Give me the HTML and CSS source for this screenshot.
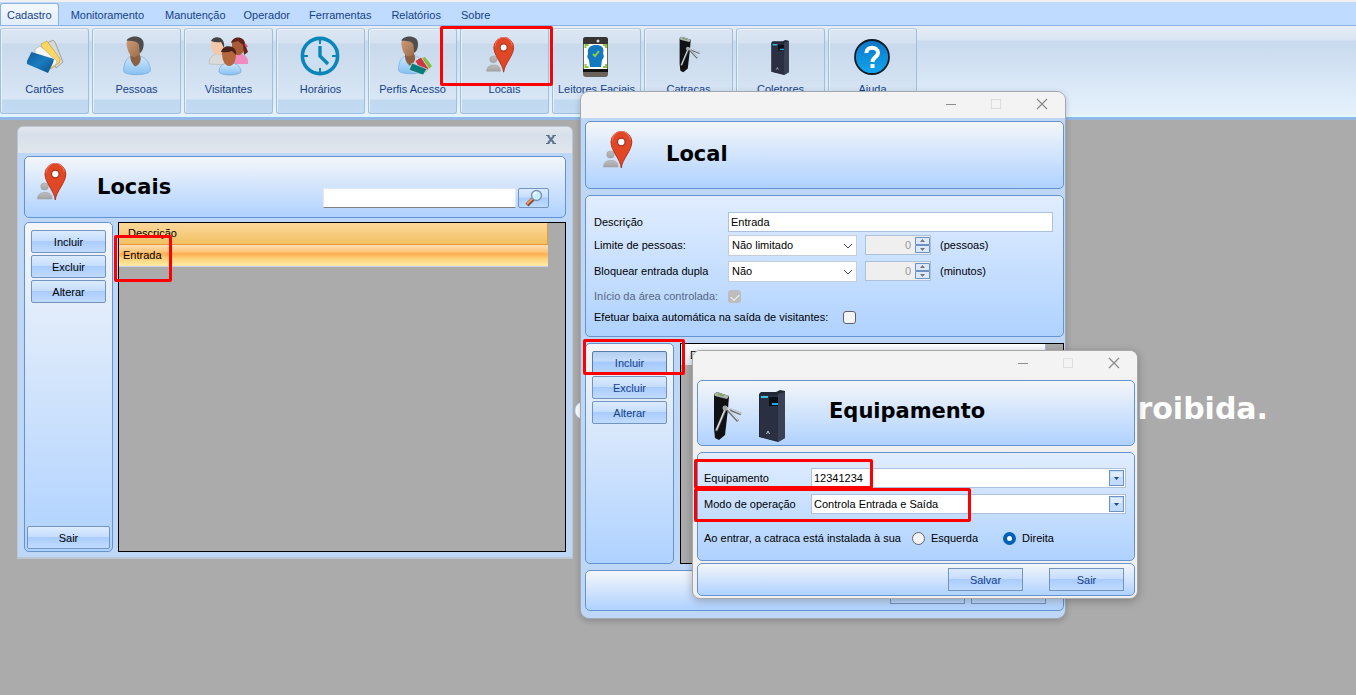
FILE: index.html
```html
<!DOCTYPE html>
<html lang="pt-BR">
<head>
<meta charset="utf-8">
<title>Controle de Acesso</title>
<link rel="stylesheet" href="styles.css">
</head>
<body>
<svg class="defs" aria-hidden="true">
  <defs>
    <linearGradient id="gBlue" x1="0" y1="0" x2="0" y2="1"><stop offset="0" stop-color="#cfe8fd"/><stop offset="1" stop-color="#86c0f2"/></linearGradient>
    <linearGradient id="gCard" x1="0" y1="0" x2="1" y2="1"><stop offset="0" stop-color="#0f5c9c"/><stop offset=".5" stop-color="#1b7cc0"/><stop offset="1" stop-color="#0c4c88"/></linearGradient>
    <linearGradient id="gGrey" x1="0" y1="0" x2="0" y2="1"><stop offset="0" stop-color="#bdbdbd"/><stop offset="1" stop-color="#a4a4a4"/></linearGradient>
    <linearGradient id="gSkin" x1="0" y1="0" x2="1" y2="1"><stop offset="0" stop-color="#cf9d78"/><stop offset="1" stop-color="#9a6a48"/></linearGradient>
    <linearGradient id="gHelp" x1="0" y1="0" x2="0" y2="1"><stop offset="0" stop-color="#0b76c8"/><stop offset="1" stop-color="#12a6ee"/></linearGradient>
    <symbol id="pin" viewBox="0 0 30 40">
      <ellipse cx="7.500" cy="23.500" rx="3.800" ry="3.500" fill="url(#gGrey)" stroke="#999" stroke-width=".5"/>
      <path d="M.500 36C.500 31 4 29.500 8 29.500S15 31 15 36Z" fill="url(#gGrey)" stroke="#999" stroke-width=".5"/>
      <path d="M18.300 37C17.500 28 8 20 8 11a10.400 10.400 0 0 1 20.800 0C28.800 20 19.100 28 18.300 37Z" fill="#e04724" stroke="#b5311a"/>
      <path d="M9.300 10a9 9 0 0 1 18-1" fill="none" stroke="#f0705a" stroke-width="1.200"/>
      <circle cx="18.300" cy="11" r="3.800" fill="#fff" stroke="#a63420" stroke-width="1.300"/>
    </symbol>
    <symbol id="person" viewBox="0 0 30 42">
      <path d="M1 37C1 27 4 24 9 21H18C25 23 29 29 29 36C29 42 2 42 1 37Z" fill="url(#gBlue)" stroke="#6ba6dc" stroke-width=".7"/>
      <path d="M8 17H17L19 23C19 28 16 31 13 32C9 28 8 25 8 22Z" fill="#8c6040"/>
      <path d="M4 8C4 1 20-1 20 9C20 17 17 22 12 22S5 15 4 8Z" fill="url(#gSkin)"/>
      <path d="M4 5C6-1 22-2 22 8C22 14 20 17 18 18L17 9C14 4 9 6 4 5Z" fill="#4d4d4d"/>
    </symbol>
    <symbol id="turnstile" viewBox="0 0 30 50">
      <path d="M1 3L4 1L16 5L15 18L12 44L6 49L2 47L1 38Z" fill="#101112"/>
      <path d="M1 3L4 1L16 5L14 8L2 5Z" fill="#b0b5b2"/><path d="M5 3L11 5" stroke="#79a852" stroke-width="1.500"/>
      <path d="M13 17L3 40M13 17L28 23M13 17L25 30" fill="none" stroke="#666d72" stroke-width="2.600"/>
      <path d="M13 16L3.500 39M13 16L28 22.500M13 16L25 29" fill="none" stroke="#dde2e5" stroke-width="1.300"/>
      <circle cx="12" cy="17" r="2.500" fill="#a0a8ac"/>
    </symbol>
    <symbol id="collector" viewBox="0 0 28 52">
      <path d="M1 4L3 2H18L22 0L27 1V48L20 52L1 47Z" fill="#202838"/>
      <path d="M20 4L27 2V48L20 52Z" fill="#3a4155"/>
      <path d="M2 5H20V51L2 47Z" fill="#2a3042"/>
      <path d="M3 6H10V8H3Z" fill="#34c5e5"/><rect x="11" y="7" width="9" height="9" fill="#0b1018"/>
      <path d="M14 13H20V15H14Z" fill="#1ba8ec"/><path d="M8.500 44L10 41L11.500 44" fill="none" stroke="#bac6d5"/>
    </symbol>
    <symbol id="chev" viewBox="0 0 10 6"><path d="M1 1L5 5L9 1" fill="none" stroke="#444"/></symbol>
    <symbol id="spin" viewBox="0 0 15 16">
      <path d="M.5 .5H14.500V7.500H.5ZM.5 8.500H14.500V15.500H.5Z" fill="#dce9fa" stroke="#6e91c4"/>
      <path d="M5 5L7.500 2L10 5ZM5 11L7.500 14L10 11Z" fill="#777"/>
    </symbol>
    <symbol id="drop" viewBox="0 0 15 16">
      <rect x=".5" y=".5" width="14" height="15" fill="#c4dcfb" stroke="#6e91c4"/>
      <path d="M2 2H13V7H2Z" fill="#dfecfd"/><path d="M5 7H10L7.500 10Z" fill="#174a92"/>
    </symbol>
    <symbol id="winctl" viewBox="0 0 104 12">
      <path d="M1 6.500H11" stroke="#8c8c8c"/><rect x="46.500" y="1.500" width="9" height="9" fill="none" stroke="#dedede"/>
      <path d="M92 1L102 11M102 1L92 11" stroke="#8a8a8a" stroke-width="1.200"/>
    </symbol>
  </defs>
</svg>

<header class="ribbon">
  <nav class="tabs">
    <button class="tab active">Cadastro</button><button class="tab">Monitoramento</button><button class="tab">Manutenção</button><button class="tab">Operador</button><button class="tab">Ferramentas</button><button class="tab">Relatórios</button><button class="tab">Sobre</button>
  </nav>
  <div class="tools">
    <button class="tool"><svg viewBox="0 0 44 42">
      <path d="M24 8L30 5L32 7L40 27L33 33Z" fill="#d8d8d8" stroke="#8a8a8a" stroke-width=".7"/>
      <path d="M18 9L24 6L37 24L36 28L28 34Z" fill="#ffd75e" stroke="#bda04d" stroke-width=".7"/>
      <path d="M12 14L17 11L34 26L33 29L26 34L12 26Z" fill="#f6f6f6" stroke="#aaa" stroke-width=".6"/>
      <path d="M8.500 17L31 24L30 28L25 38L4 29L4 26Z" fill="url(#gCard)"/></svg><span>Cartões</span></button>
    <button class="tool"><svg viewBox="0 0 44 42"><use href="#person" x="7" y="1" width="30" height="40"/></svg><span>Pessoas</span></button>
    <button class="tool"><svg viewBox="0 0 44 42">
      <path d="M2 29C2 21 7 19 12 19S23 23 22 30Z" fill="#dadada" stroke="#aaa" stroke-width=".5"/>
      <path d="M4 9C4 0 17 1 17 10C17 17 14 21 10 20S4 14 4 9Z" fill="#f3c7a9"/><path d="M4 6C6 0 19 0 17 13L14 7Q9 8 4 6Z" fill="#444"/>
      <path d="M24 29C24 21 28 19 33 19S42 23 41 29Z" fill="#f28ac2"/>
      <path d="M25 9C25 0 38 2 38 10C38 17 34 21 30 20S25 14 25 9Z" fill="#a95a36"/><path d="M24 8C26 0 38 1 38 9L41 17L37 20L36 10L31 6Z" fill="#60241b"/><path d="M38 9L40 12" stroke="#e04b87" stroke-width="2"/>
      <path d="M12 37C12 30 17 28 23 28S34 31 34 37C31 41 15 41 12 37Z" fill="url(#gBlue)" stroke="#6b9dcb" stroke-width=".6"/>
      <path d="M15 18C15 10 29 10 29 19C29 27 26 31 22 31S15 25 15 18Z" fill="#b4673d"/><path d="M14 17C16 8 31 10 29 20L25 16Q20 18 14 17Z" fill="#4b2219"/></svg><span>Visitantes</span></button>
    <button class="tool"><svg viewBox="0 0 44 42"><circle cx="21" cy="21" r="17.600" fill="#cbdff0" stroke="#0a86b8" stroke-width="3.600"/><path d="M21 5V9M21 33V37M5 21H9M33 21H37" stroke="#0a86b8" stroke-width="2"/><path d="M21 11V21L29 29" fill="none" stroke="#0a86b8" stroke-width="3.400"/></svg><span>Horários</span></button>
    <button class="tool"><svg viewBox="0 0 44 42"><use href="#person" x="6" y="1" width="29" height="39"/><path d="M29 24L34 22L41 31L34 38Z" fill="#83bd43"/><path d="M24 26L30 22L38 34L31 38Z" fill="#c93745" stroke="#f3dce2" stroke-width=".8"/><path d="M21 28L36 34L32 40L18 35Z" fill="#087c7b" stroke="#e1f2f4" stroke-width=".6"/></svg><span>Perfis Acesso</span></button>
    <button class="tool"><svg viewBox="0 0 44 42"><use href="#pin" x="3" y="2" width="29" height="38"/></svg><span>Locais</span></button>
    <button class="tool"><svg viewBox="0 0 44 42"><rect x="8" y="2" width="25" height="40" rx="3" fill="#6b625c"/><path d="M8 9V5Q8 2 11 2H30Q33 2 33 5V9Z" fill="#383432"/><rect x="9" y="9" width="23" height="25" fill="#fff"/><path d="M8 34H33V37H8Z" fill="#111"/><circle cx="23" cy="6" r="1.500" fill="#ddd"/><path d="M10.500 13V10H13.500M28 10H31V13M10.500 29V32H13.500M28 32H31V29" fill="none" stroke="#8cc63f" stroke-width="2"/><path d="M13 19C12 12 16 10 21 10S30 12 28 19C30 21 28 24 27 25L26 32H15L14 25C12 23 12 21 13 19Z" fill="#1478be"/><path d="M18 19L20 21L24 16" fill="none" stroke="#8bd23f" stroke-width="2"/></svg><span>Leitores Faciais</span></button>
    <button class="tool"><svg viewBox="0 0 44 42"><use href="#turnstile" x="9" y="1" width="28" height="37"/></svg><span>Catracas</span></button>
    <button class="tool"><svg viewBox="0 0 44 42"><use href="#collector" x="10" y="5" width="22" height="35"/></svg><span>Coletores</span></button>
    <button class="tool"><svg viewBox="0 0 44 42"><circle cx="21" cy="22" r="17" fill="url(#gHelp)" stroke="#111b25" stroke-width="1.800"/><path d="M15.500 18C15 11 27 11 27 18C27 22 21.500 22 21.500 27" fill="none" stroke="#fff" stroke-width="4"/><rect x="19.500" y="29" width="4" height="4" fill="#fff"/></svg><span>Ajuda</span></button>
  </div>
</header>
<main class="desktop"><p class="watermark"><span>c</span><span>roibida.</span></p></main>

<section class="window list-window" aria-label="Locais">
  <div class="titlebar"><button class="close" aria-label="Fechar"><svg viewBox="0 0 10 9"><path d="M0 .5H3.500M6.500 .5H10M0 8.500H3.500M6.500 8.500H10" stroke="#536985"/><path d="M2 1L8 8M8 1L2 8" stroke="#5d7594" stroke-width="2"/></svg></button></div>
  <div class="body">
    <div class="panel head">
      <svg class="pin"><use href="#pin"/></svg><h1>Locais</h1>
      <form class="search"><input type="text" aria-label="Pesquisar"><button type="button" class="btn" aria-label="Buscar"><svg viewBox="0 0 18 18"><path d="M2 16L8 10" stroke="#7b4a38" stroke-width="4"/><path d="M2 15L8 9" stroke="#f49850" stroke-width="2"/><circle cx="11.500" cy="6.500" r="5" fill="#c4f0ff" stroke="#7e8fb0" stroke-width="1.400"/><path d="M8.500 6Q9 3.500 11.500 3.300" stroke="#fff" stroke-width="1.500" fill="none"/></svg></button></form>
    </div>
    <div class="content">
      <div class="panel side"><button class="btn">Incluir</button><button class="btn">Excluir</button><button class="btn">Alterar</button><button class="btn exit">Sair</button></div>
      <div class="grid"><table><thead><tr><th>Descrição</th></tr></thead><tbody><tr><td>Entrada</td></tr></tbody></table></div>
    </div>
  </div>
</section>

<section class="window local-window" aria-label="Local">
  <div class="titlebar"><svg class="winctl"><use href="#winctl"/></svg></div>
  <div class="body">
    <div class="panel head"><svg class="pin"><use href="#pin"/></svg><h1>Local</h1></div>
    <form class="panel fields">
      <div class="row"><label for="desc">Descrição</label><input id="desc" class="text" type="text" value="Entrada"></div>
      <div class="row near"><label for="lim">Limite de pessoas:</label><span class="combo"><select id="lim"><option>Não limitado</option></select><svg><use href="#chev"/></svg></span><span class="number"><input id="np" type="text" value="0" disabled><svg><use href="#spin"/></svg></span><label for="np" class="unit">(pessoas)</label></div>
      <div class="row"><label for="dup">Bloquear entrada dupla</label><span class="combo"><select id="dup"><option>Não</option></select><svg><use href="#chev"/></svg></span><span class="number"><input id="nm" type="text" value="0" disabled><svg><use href="#spin"/></svg></span><label for="nm" class="unit">(minutos)</label></div>
      <div class="row low"><label for="ini" class="dim">Início da área controlada:</label><input id="ini" type="checkbox" checked disabled></div>
      <div class="row low near"><label for="bx" class="long">Efetuar baixa automática na saída de visitantes:</label><input id="bx" type="checkbox"></div>
    </form>
    <div class="content">
      <div class="panel side"><button class="btn pressed">Incluir</button><button class="btn">Excluir</button><button class="btn">Alterar</button></div>
      <div class="grid"><table><thead><tr><th>Descrição</th></tr></thead></table></div>
    </div>
    <div class="panel foot"><button class="btn square" aria-label="Salvar local"></button><button class="btn square" aria-label="Sair de local"></button></div>
  </div>
</section>

<section class="window equip-window" aria-label="Equipamento">
  <div class="titlebar"><svg class="winctl"><use href="#winctl"/></svg></div>
  <div class="body">
    <div class="panel head"><svg class="gate"><use href="#turnstile"/></svg><svg class="box"><use href="#collector"/></svg><h1>Equipamento</h1></div>
    <form class="panel fields">
      <div class="row"><label for="eq">Equipamento</label><span class="combo"><select id="eq"><option>12341234</option></select><svg><use href="#drop"/></svg></span></div>
      <div class="row"><label for="modo">Modo de operação</label><span class="combo"><select id="modo"><option>Controla Entrada e Saída</option></select><svg><use href="#drop"/></svg></span></div>
      <div class="row sides"><span class="question">Ao entrar, a catraca está instalada à sua</span><label><input type="radio" name="lado">Esquerda</label><label><input type="radio" name="lado" checked>Direita</label></div>
    </form>
    <div class="panel foot"><button class="btn square">Salvar</button><button class="btn square">Sair</button></div>
  </div>
</section>

<i class="mark mark-locais"></i><i class="mark mark-row"></i><i class="mark mark-add"></i><i class="mark mark-equip"></i><i class="mark mark-mode"></i>
</body>
</html>
```
FILE: styles.css
```css
* { box-sizing: border-box; }
body { margin: 0; min-height: 100vh; display: flex; flex-direction: column; position: relative; overflow: hidden; background: #ababab; color: #000; font: 11px "Liberation Sans", Arial, sans-serif; }
button, input, select { font: inherit; color: inherit; margin: 0; padding: 0; }
svg { display: block; }
.defs { position: absolute; width: 0; height: 0; }

.ribbon { border-top: 2px solid #f0f0f0; background: #bfdbff; }
.tabs { display: flex; height: 23px; align-items: flex-end; }
.tab { height: 22px; padding: 0 11px; border: 1px solid transparent; border-bottom: 0; background: none; color: #15428b; white-space: nowrap; }
.tab.active { padding: 0 6px; background: linear-gradient(#f4f9ff, #e1edfc); border-color: #8db2e3; border-radius: 3px 3px 0 0; }
.tab:nth-child(n+3) { padding: 0 8px; }
.tab:nth-child(n+5) { padding: 0 9px; }
.tools { display: flex; gap: 3px; height: 95px; padding: 2px 0 5px; border-top: 1px solid #8db2e3; border-bottom: 3px solid #94b8e6; background: linear-gradient(#e5edf7, #dbe6f4 14px, #c9daee 15px, #e6f2fd 90px, #dcfbff); box-shadow: inset 0 -1px #d8ffff; }
.tool { width: 89px; height: 86px; flex: none; display: flex; flex-direction: column; align-items: center; padding: 6px 0 0; border: 1px solid #a0bfdc; border-top-color: #bdcbdc; border-radius: 3px; color: #15428b; background: linear-gradient(#dce6f3, #d6e2f1 14px, #c8d9ec 15px, #d8e6f5 70px, #c0d8f0 71px, #c3daf3); box-shadow: inset 1px 1px #e8f1fa; }
.tool svg { width: 44px; height: 42px; }
.tool span { margin-top: 6px; line-height: 13px; white-space: nowrap; }
.desktop { flex: 1; }
.watermark { display: flex; justify-content: space-between; width: 694px; margin: 270px 0 0 574px; color: #fff; font: bold 30px/38px "DejaVu Sans", sans-serif; }

.window { position: absolute; display: flex; flex-direction: column; overflow: hidden; background: #bfd7f7; }
.body { flex: 1; display: flex; flex-direction: column; }
.titlebar { height: 26px; flex: none; display: flex; justify-content: flex-end; align-items: center; background: #f3f3f3; }
.winctl { width: 104px; height: 12px; margin-bottom: 2px; }
.panel { border: 1px solid #6593cf; border-radius: 5px; background: linear-gradient(#f4f6f9, #afd2ff); }
.head { display: flex; align-items: center; }
h1 { margin: 0; font: bold 21px/26px "DejaVu Sans", sans-serif; }
.pin { width: 30px; height: 40px; }
.content { display: flex; gap: 5px; flex: 1; }
.side { width: 89px; display: flex; flex-direction: column; align-items: center; gap: 2px; padding: 7px 2px 2px; }
.btn { width: 75px; height: 23px; border: 1px solid #7393c0; border-radius: 2px; background: linear-gradient(#dcebfe, #c6defe 45%, #aaccfc 50%, #c0dbff); }
.btn.exit { width: 83px; margin-top: auto; }
.btn.pressed { border-color: #5a7cab; background: linear-gradient(#b5cff0, #c6dcfa 40%, #a5c9fc 50%, #b9d7ff); }
.btn.square { border-radius: 0; }
.grid { flex: 1; border: 1px solid #000; background: #ababab; }
table { width: 100%; border-collapse: collapse; }
th { height: 21px; padding: 0 9px; text-align: left; font-weight: normal; }
td { height: 22px; padding: 0 4px; }

.list-window { left: 17px; top: 126px; width: 556px; height: 433px; border: 1px solid #bcc6d2; border-bottom-width: 2px; border-radius: 6px 6px 0 0; }
.list-window .titlebar { background: linear-gradient(#e3e8ee, #d7dfe9 7px, #e2e7ed); padding-right: 16px; }
.close { width: 10px; height: 9px; margin-bottom: 2px; border: 0; background: none; }
.list-window .body { padding: 3px 6px 5px; gap: 4px; }
.list-window .head { height: 62px; padding: 0 16px 0 12px; }
.list-window .pin { margin-bottom: 8px; }
.list-window h1 { margin-left: 30px; }
.search { display: flex; align-items: center; gap: 2px; margin-left: auto; padding-top: 21px; }
.search input { width: 193px; height: 20px; border: 1px solid #e2e8ef; border-bottom-color: #808080; background: #fff; }
.search .btn { width: 31px; height: 20px; display: flex; align-items: center; justify-content: center; }
.search svg { width: 18px; height: 18px; }
.list-window .grid { padding-right: 17px; }
.list-window th { background: linear-gradient(#fbd89b, #f1c062); border: solid #e9983a; border-width: 0 1px 1px 0; }
.list-window td { background: linear-gradient(#fce0b8, #fdc274 8px, #fda94c 9px, #fed07a 14px, #ffeca0); border-bottom: 1px solid #c8d4e4; }

.local-window { left: 580px; top: 91px; width: 486px; height: 528px; border: 1px solid #a0a8b2; border-radius: 9px; box-shadow: 0 2px 6px #0003; }
.local-window .titlebar, .equip-window .titlebar { padding-right: 16px; }
.local-window .body { padding: 3px 1px 7px 4px; gap: 6px; }
.local-window .head { height: 68px; padding: 0 17px; }
.local-window .pin { margin-bottom: 8px; }
.local-window h1 { margin: 0 0 2px 33px; }
.fields { background: linear-gradient(#e1edff, #afd2ff); }
.local-window .fields { height: 142px; padding: 15px 10px 0 8px; }
.row { display: flex; align-items: center; height: 22px; margin-top: 4px; }
.row:first-child { margin-top: 0; }
.row.near { margin-top: 1px; }
.row.low { height: 20px; }
.row.low.near { margin-top: 1px; }
.row > label:first-child { width: 134px; white-space: nowrap; }
.row > label.long { width: 243px; }
.row .dim { color: #586880; }
.text { flex: 1; height: 20px; padding: 0 2px; border: 1px solid #abc1de; background: #fff; }
.combo { position: relative; width: 129px; height: 21px; }
.combo select { appearance: none; width: 100%; height: 100%; padding: 0 3px; border: 1px solid #c5cdd8; background: #fff; border-radius: 0; }
.combo svg { position: absolute; right: 4px; top: 8px; width: 10px; height: 6px; pointer-events: none; }
.number { position: relative; width: 66px; height: 20px; margin-left: 8px; }
.number input { width: 100%; height: 100%; padding: 0 19px 0 0; border: 1px solid #abc1de; background: #efefef; color: #999; text-align: right; }
.number svg { position: absolute; right: 1px; top: 2px; width: 15px; height: 16px; }
.unit { margin-left: 9px; }
input[type="checkbox"] { appearance: none; display: flex; align-items: center; justify-content: center; width: 13px; height: 13px; border: 1px solid #5f6062; border-radius: 3px; background: #f4f4f4; }
input[type="checkbox"]:checked { border-color: #bdbdbd; background: #bdbdbd; }
input[type="checkbox"]:checked::before { content: ""; width: 7px; height: 4px; border: solid #f6f6f6; border-width: 0 0 1px 1px; transform: rotate(-45deg); }
.row > input#bx { margin-left: 6px; }
.local-window .side { color: #15428b; }
.local-window .content { gap: 6px; }
.local-window .grid { padding-right: 17px; }
.local-window th { background: linear-gradient(#fff, #e4edf8); border-right: 1px solid #9ebbe0; }
.foot { display: flex; align-items: center; justify-content: flex-end; color: #15428b; }
.local-window .foot { height: 41px; gap: 6px; padding: 3px 17px 0 0; }

.equip-window { left: 692px; top: 350px; width: 446px; height: 249px; border: 1px solid #a8a8a8; border-radius: 8px; background: #f0f0f0; box-shadow: 0 2px 8px #0004; }
.equip-window .body { padding: 3px 2px 2px 4px; }
.equip-window .head { height: 66px; padding: 5px 14px 0; }
.gate { width: 32px; height: 50px; }
.box { width: 28px; height: 52px; margin-left: 14px; }
.equip-window h1 { margin: 0 0 9px 43px; }
.equip-window .fields { height: 109px; margin: 6px 0 2px; padding: 14px 8px 0 6px; }
.equip-window .row > label:first-child { width: 107px; }
.equip-window .combo { flex: 1; height: 20px; }
.equip-window .combo select { border-color: #abc1de; padding: 0 2px; }
.equip-window .combo svg { width: 15px; height: 16px; right: 2px; top: 2px; }
.row.sides { margin-top: 12px; }
.question { width: 208px; white-space: nowrap; }
.sides label { display: flex; align-items: center; gap: 6px; }
.sides label + label { margin-left: 25px; }
input[type="radio"] { appearance: none; width: 13px; height: 13px; border: 1px solid #666; border-radius: 50%; background: #f4f4f4; }
input[type="radio"]:checked { border: 4px solid #005fb8; background: #fff; }
.equip-window .foot { height: 33px; gap: 26px; padding-right: 10px; }

.mark { position: absolute; border: 3px solid #f00; border-radius: 2px; pointer-events: none; }
.mark-locais { left: 440px; top: 26px; width: 113px; height: 60px; }
.mark-row { left: 114px; top: 235px; width: 58px; height: 47px; }
.mark-add { left: 583px; top: 339px; width: 102px; height: 36px; }
.mark-equip { left: 694px; top: 459px; width: 179px; height: 30px; }
.mark-mode { left: 694px; top: 488px; width: 277px; height: 34px; }
```
